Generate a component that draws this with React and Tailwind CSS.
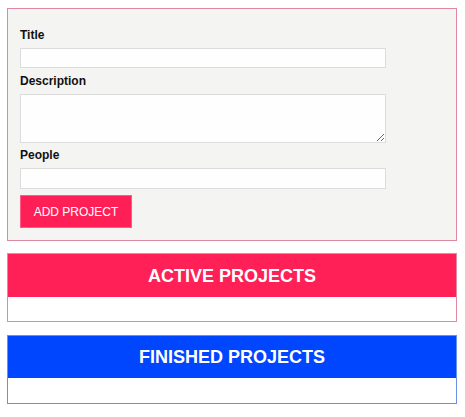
export default function App() {
  const font = { fontFamily: '"Liberation Sans", Arial, Helvetica, sans-serif' };
  return (
    <div className="min-h-[417px] bg-white pt-[8px] pl-[7px]" style={font}>
      <div className="w-[450px] border border-[#db8aa2] bg-[#f4f4f3] pt-[19px] px-[12px] pb-[12px] flex flex-col items-start">
        <label className="text-[12px] leading-[14px] font-bold text-[#111]">Title</label>
        <input className="mt-[6px] h-[20px] w-[366px] border border-[#dcdcdc] bg-[#fefefe] outline-none" />
        <label className="mt-[6px] text-[12px] leading-[14px] font-bold text-[#111]">Description</label>
        <textarea className="mt-[6px] h-[49px] w-[366px] border border-[#dcdcdc] bg-[#fefefe] outline-none block" />
        <label className="mt-[5px] text-[12px] leading-[14px] font-bold text-[#111]">People</label>
        <input className="mt-[6px] h-[21px] w-[366px] border border-[#dcdcdc] bg-[#fefefe] outline-none" />
        <button className="mt-[6px] h-[33px] w-[112px] bg-[#ff1f57] border border-[#ff5a86] text-white text-[12px] leading-[14px] text-center">
          ADD PROJECT
        </button>
      </div>

      <div className="mt-[12px] w-[450px] border border-[#df8ca3] flex flex-col">
        <div className="h-[43px] bg-[#ff2057] flex items-center justify-center">
          <span className="text-white font-bold text-[18px] leading-[20px]">ACTIVE PROJECTS</span>
        </div>
        <div className="h-[24px] bg-white" />
      </div>

      <div className="mt-[13px] w-[450px] border border-[#6b8fe3] flex flex-col">
        <div className="h-[42px] bg-[#0046ff] flex items-center justify-center">
          <span className="text-white font-bold text-[18px] leading-[20px]">FINISHED PROJECTS</span>
        </div>
        <div className="h-[25px] bg-white" />
      </div>
    </div>
  );
}
